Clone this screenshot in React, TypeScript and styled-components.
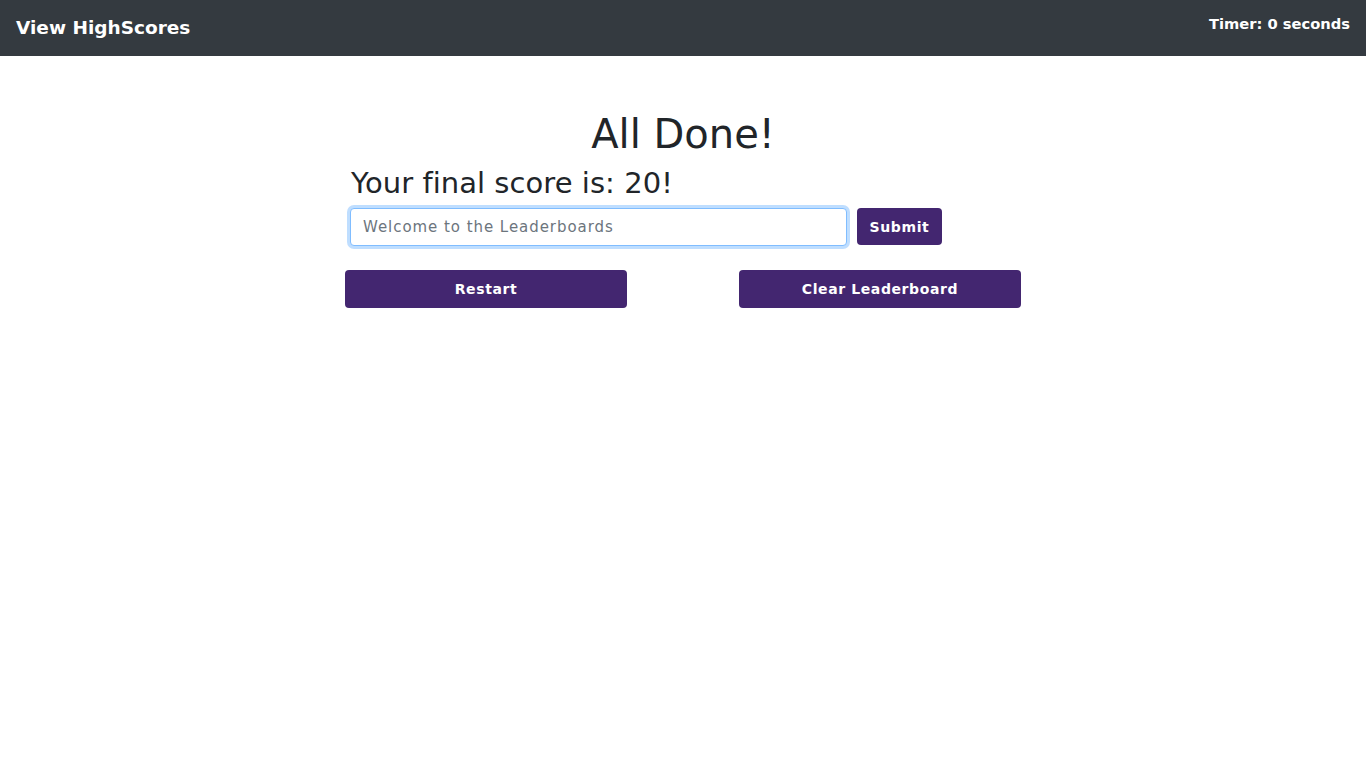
import React, { useState } from 'react';
import styled, { createGlobalStyle } from 'styled-components';

const GlobalStyle = createGlobalStyle`
  body {
    margin: 0;
    background: #ffffff;
    font-family: 'DejaVu Sans', 'Liberation Sans', sans-serif;
    color: #212529;
  }
`;

const Navbar = styled.nav`
  height: 56px;
  background: #343a40;
  display: flex;
  justify-content: space-between;
  align-items: flex-start;
  padding: 0 16px;
  box-sizing: border-box;
`;

const Brand = styled.a`
  color: #fff;
  font-size: 18.5px;
  font-weight: bold;
  line-height: 56px;
  text-decoration: none;
  cursor: pointer;
`;

const Timer = styled.span`
  color: #fff;
  font-size: 14.7px;
  font-weight: bold;
  margin-top: 15px;
`;

const Main = styled.main`
  width: 676px;
  margin: 54px auto 0;
`;

const Title = styled.h1`
  margin: 0;
  text-align: center;
  font-size: 40px;
  font-weight: 500;
  line-height: 48px;
`;

const Score = styled.h3`
  margin: 8px 0 0 6px;
  font-size: 29px;
  font-weight: 500;
  line-height: 34px;
  letter-spacing: 0.05px;
`;

const InputRow = styled.form`
  display: flex;
  gap: 10px;
  margin: 8px 0 0 5px;
`;

const NameInput = styled.input`
  width: 497px;
  height: 38px;
  box-sizing: border-box;
  padding: 0 12px;
  font-family: inherit;
  font-size: 15px;
  letter-spacing: 0.95px;
  color: #495057;
  border: 1px solid #80bdff;
  border-radius: 4px;
  box-shadow: 0 0 0 3px rgba(0, 123, 255, 0.25);
  outline: none;

  &::placeholder {
    color: #6c757d;
  }
`;

const Button = styled.button<{ wide?: boolean }>`
  width: ${p => (p.wide ? '282px' : '85px')};
  height: ${p => (p.wide ? '38px' : '37px')};
  background: #432670;
  color: #fff;
  border: none;
  border-radius: 4px;
  font-family: inherit;
  font-weight: bold;
  font-size: 14px;
  letter-spacing: 0.6px;
  cursor: pointer;
`;

const ButtonRow = styled.div`
  display: flex;
  justify-content: space-between;
  margin-top: 24px;
`;

export default function App() {
  const [name, setName] = useState('');
  return (
    <>
      <GlobalStyle />
      <Navbar>
        <Brand>View HighScores</Brand>
        <Timer>Timer: 0 seconds</Timer>
      </Navbar>
      <Main>
        <Title>All Done!</Title>
        <Score>Your final score is: 20!</Score>
        <InputRow onSubmit={e => e.preventDefault()}>
          <NameInput
            placeholder="Welcome to the Leaderboards"
            value={name}
            onChange={e => setName(e.target.value)}
          />
          <Button type="submit">Submit</Button>
        </InputRow>
        <ButtonRow>
          <Button wide>Restart</Button>
          <Button wide>Clear Leaderboard</Button>
        </ButtonRow>
      </Main>
    </>
  );
}
